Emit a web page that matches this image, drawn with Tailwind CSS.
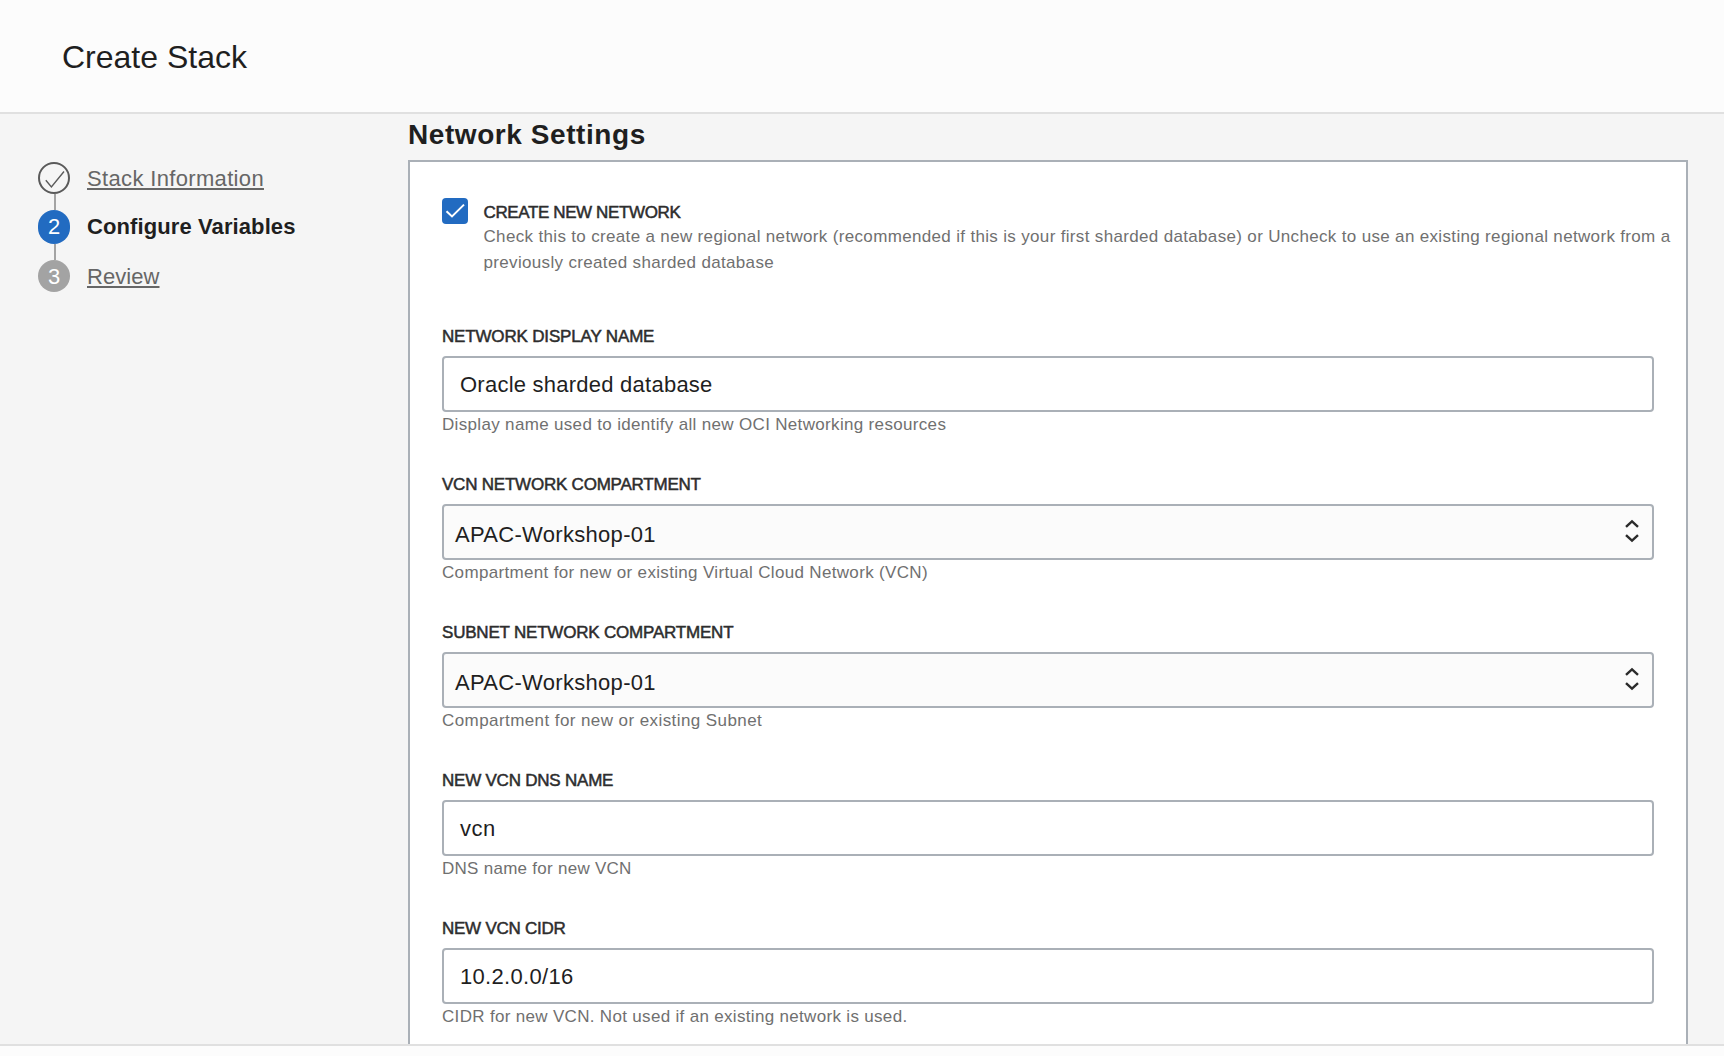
<!DOCTYPE html>
<html lang="en">
<head>
<meta charset="utf-8">
<title>Create Stack</title>
<script src="https://cdn.jsdelivr.net/npm/@tailwindcss/browser@4"></script>
</head>
<body class="flex h-screen flex-col overflow-hidden bg-[#f5f5f5] font-['Liberation_Sans',Arial,sans-serif] text-[#1f1f1f]">
<header class="h-[114px] shrink-0 border-b-2 border-[#e0e0e0] bg-[#fcfcfc] pt-[25px] pl-[62px]">
  <h1 class="text-[32px] leading-[64px]">Create Stack</h1>
</header>

<div class="flex min-h-0 flex-1">
  <!-- Wizard steps -->
  <nav class="w-[408px] shrink-0 pt-12 pl-[38px]">
    <ol class="text-[22px] leading-[34px]">
      <li class="flex h-12 gap-[17px] text-[#666]">
        <div class="flex w-8 flex-col items-center">
          <svg class="size-8 shrink-0" viewBox="0 0 32 32" fill="none" stroke="#5a5a5a"><circle cx="16" cy="16" r="15" stroke-width="2"/><path d="M7.8 18.3 13.4 25 26 9.5" stroke-width="1.4"/></svg>
          <span class="ml-[2px] h-4 w-[2px] bg-[#a3a3a3]"></span>
        </div>
        <a class="tracking-[0.34px] underline decoration-2 underline-offset-2 [text-decoration-skip-ink:none]">Stack Information</a>
      </li>
      <li class="flex h-[50px] gap-[17px]">
        <div class="flex w-8 flex-col items-center">
          <span class="h-[34px] w-8 shrink-0 rounded-[16px] bg-[#226bc1] text-center text-white">2</span>
          <span class="ml-[2px] h-4 w-[2px] bg-[#a3a3a3]"></span>
        </div>
        <span class="font-bold tracking-[0.1px]">Configure Variables</span>
      </li>
      <li class="flex gap-[17px] text-[#666]">
        <span class="size-8 shrink-0 rounded-full bg-[#a3a3a3] text-center text-white">3</span>
        <a class="tracking-[0.06px] underline decoration-2 underline-offset-2 [text-decoration-skip-ink:none]">Review</a>
      </li>
    </ol>
  </nav>

  <main class="flex w-[1280px] flex-col">
    <h2 class="mb-[4px] text-[28px] leading-[42px] font-bold tracking-[0.57px]">Network Settings</h2>
    <section class="flex-1 border-x-2 border-t-2 border-[#aab0b7] bg-white pl-8 text-[17px]">
      <div class="flex h-[162px] gap-4 pt-9">
        <span class="flex size-[26px] shrink-0 items-center justify-center rounded-[4px] bg-[#226bc1]">
          <svg class="size-[26px]" viewBox="0 0 26 26" fill="none" stroke="#fff" stroke-width="2"><path d="M4.5 13.2 10 18.4 22 6.6"/></svg>
        </span>
        <div class="-ml-[0.5px] w-[1188px] pt-[3px]">
          <div class="-mb-px leading-6 tracking-[-0.38px] text-[#2d2d2d] [-webkit-text-stroke:0.5px_#2d2d2d]">CREATE NEW NETWORK</div>
          <p class="leading-[26px] tracking-[0.335px] text-[#707070]">Check this to create a new regional network (recommended if this is your first sharded database) or Uncheck to use an existing regional network from a<br>previously created sharded database</p>
        </div>
      </div>

      <div class="flex w-[1212px] flex-col gap-[34px] leading-[26px]">
        <div>
          <div class="mb-[6px] tracking-[-0.17px] text-[#2d2d2d] [-webkit-text-stroke:0.5px_#2d2d2d]">NETWORK DISPLAY NAME</div>
          <div class="flex h-14 items-center rounded-[4px] border-2 border-[#aab0b7] px-4 pt-[2px] text-[22px] tracking-[0.24px]">Oracle sharded database</div>
          <p class="tracking-[0.33px] text-[#707070]">Display name used to identify all new OCI Networking resources</p>
        </div>
        <div>
          <div class="mb-[6px] tracking-[-0.22px] text-[#2d2d2d] [-webkit-text-stroke:0.5px_#2d2d2d]">VCN NETWORK COMPARTMENT</div>
          <div class="flex h-14 items-center justify-between rounded-[4px] border-2 border-[#aab0b7] bg-[#fbfbfb] pr-[13px] pl-[11px] text-[22px] tracking-[0.3px]">
            <span class="pt-[6px]">APAC-Workshop-01</span>
            <svg class="mb-[2px] h-6 w-[14px]" viewBox="0 0 14 24" fill="none" stroke="#2b2b2b" stroke-width="2.4"><path d="M1 7.8 7 2.3l6 5.5M1 16.2 7 21.7l6-5.5"/></svg>
          </div>
          <p class="tracking-[0.33px] text-[#707070]">Compartment for new or existing Virtual Cloud Network (VCN)</p>
        </div>
        <div>
          <div class="mb-[6px] tracking-[-0.2px] text-[#2d2d2d] [-webkit-text-stroke:0.5px_#2d2d2d]">SUBNET NETWORK COMPARTMENT</div>
          <div class="flex h-14 items-center justify-between rounded-[4px] border-2 border-[#aab0b7] bg-[#fbfbfb] pr-[13px] pl-[11px] text-[22px] tracking-[0.3px]">
            <span class="pt-[6px]">APAC-Workshop-01</span>
            <svg class="mb-[2px] h-6 w-[14px]" viewBox="0 0 14 24" fill="none" stroke="#2b2b2b" stroke-width="2.4"><path d="M1 7.8 7 2.3l6 5.5M1 16.2 7 21.7l6-5.5"/></svg>
          </div>
          <p class="tracking-[0.42px] text-[#707070]">Compartment for new or existing Subnet</p>
        </div>
        <div>
          <div class="mb-[6px] tracking-[-0.22px] text-[#2d2d2d] [-webkit-text-stroke:0.5px_#2d2d2d]">NEW VCN DNS NAME</div>
          <div class="flex h-14 items-center rounded-[4px] border-2 border-[#aab0b7] px-4 pt-[2px] text-[22px] tracking-[0.5px]">vcn</div>
          <p class="tracking-[0.27px] text-[#707070]">DNS name for new VCN</p>
        </div>
        <div>
          <div class="mb-[6px] tracking-[-0.25px] text-[#2d2d2d] [-webkit-text-stroke:0.5px_#2d2d2d]">NEW VCN CIDR</div>
          <div class="flex h-14 items-center rounded-[4px] border-2 border-[#aab0b7] px-4 pt-[2px] text-[22px] tracking-[0.32px]">10.2.0.0/16</div>
          <p class="tracking-[0.32px] text-[#707070]">CIDR for new VCN. Not used if an existing network is used.</p>
        </div>
      </div>
    </section>
  </main>
</div>

<footer class="h-3 shrink-0 border-t-2 border-[#e0e0e0] bg-[#fcfcfc]"></footer>
</body>
</html>
